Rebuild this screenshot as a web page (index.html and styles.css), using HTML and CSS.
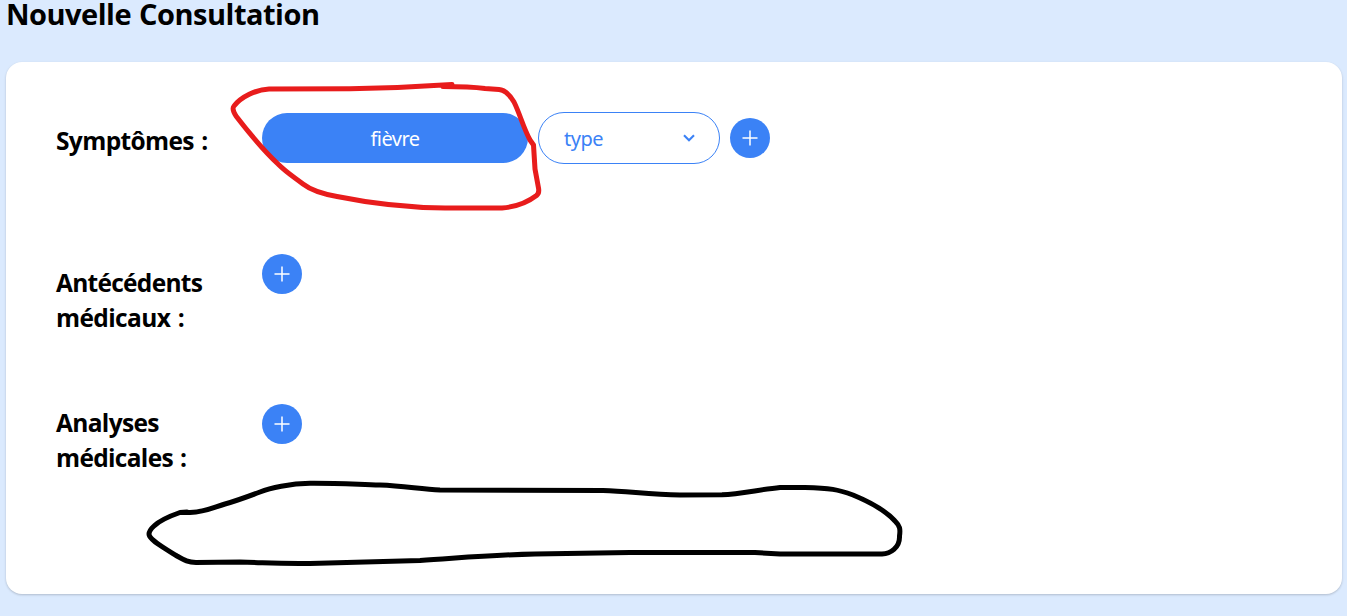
FILE: index.html
```html
<!DOCTYPE html>
<html lang="fr">
<head>
<meta charset="utf-8">
<title>Nouvelle Consultation</title>
<link rel="stylesheet" href="styles.css">
</head>
<body>
<main class="page">
  <h1 class="title">Nouvelle Consultation</h1>
  <section class="card">
    <div class="row row-symptoms">
      <h2 class="label"><span class="line symptoms">Symptômes :</span></h2>
      <div class="controls">
        <button class="pill"><span class="pill-text">fièvre</span></button>
        <button class="select"><span class="select-text">type</span>
          <svg class="chevron" width="12" height="8" viewBox="0 0 12 8"><path d="M1 1.200 6 6.200l5-5" fill="none" stroke="currentColor" stroke-width="2.100"/></svg>
        </button>
        <button class="add" aria-label="Ajouter"><svg width="16" height="16" viewBox="0 0 16 16"><path d="M8 .5v15M.5 8h15"/></svg></button>
      </div>
    </div>
    <div class="row row-history">
      <h2 class="label"><span class="line history">Antécédents</span><span class="line history-2">médicaux :</span></h2>
      <button class="add" aria-label="Ajouter"><svg width="16" height="16" viewBox="0 0 16 16"><path d="M8 .5v15M.5 8h15"/></svg></button>
    </div>
    <div class="row row-tests">
      <h2 class="label"><span class="line tests">Analyses</span><span class="line tests-2">médicales :</span></h2>
      <button class="add" aria-label="Ajouter"><svg width="16" height="16" viewBox="0 0 16 16"><path d="M8 .5v15M.5 8h15"/></svg></button>
    </div>
  </section>
</main>
<svg class="ink" width="1347" height="616" viewBox="0 0 1347 616">
  <path class="red" d="M452 84.500C430 86 400 88 350 88.800L269 89C256 89.500 241 97 234 106Q231.500 109 236 116C246 129 262 149 278 164C287 173 294 177 303 184C312 191 323 194 337 196.500C364 202 400 207.500 445 208L502 208C515 207 528 202 536.500 195.500Q539.500 193 538.500 188L535 169L533.500 145L530 140C523 127 520 114 514 102C511 97 506 90 499 89.500L485 88.500C470 86.500 455 86.500 443 86.500"/>
  <path class="black" d="M187 512L180 512.500C170 516 159 521 154 526Q147.500 532 149.500 536C153 542 164 548 177 556C184 560 188 562.500 196 562.500L240 562C265 562.500 275 564 310 563.500C350 562.500 380 561.500 420 560.500C460 558 490 555 535 554L630 552.500L755 552.500L780 554L882 554C890 553.500 900 548 899.500 536C900.500 529 900 526 895 521C886 511 870 502 853 495C838 489.500 830 488 805 487.500L780 487.500C760 489.500 740 494 722 494.800L680 495C650 494.500 630 491.500 603 490.500L440 490C422 489.500 405 486 380 485C350 484 335 483 310 483.200C290 483.500 270 488 260 492C248 496.500 236 501 225 504C212 508 205 512 190 512.500L180 512.500"/>
</svg>
</body>
</html>
```
FILE: styles.css
```css
* { box-sizing: border-box; }
body {
  margin: 0;
  height: 616px;
  overflow: hidden;
  background: #dbeafe;
  color: #000;
  font-family: "Open Sans", "Noto Sans", sans-serif;
}
h1, h2 { margin: 0; }
button {
  border: 0;
  padding: 0;
  margin: 0;
  font-family: "Noto Sans", "Open Sans", sans-serif;
  font-size: 20px;
  line-height: 28px;
}
.page { padding: 0 5px 0 6px; }
.title {
  height: 62px;
  padding-left: 0;
  font-size: 29px;
  line-height: 27px;
  font-weight: 700;
  letter-spacing: -0.5px;
  word-spacing: 1px;
  white-space: nowrap;
}
.card {
  height: 532px;
  padding: 50px 50px 0;
  border-radius: 16px;
  background: #fff;
  box-shadow: 0 1px 3px rgba(0, 0, 0, .1), 0 1px 2px rgba(0, 0, 0, .1);
}
.row { display: flex; align-items: flex-start; }
.row-symptoms { height: 142px; }
.row-history { height: 150px; }
.label {
  width: 206px;
  padding-top: 11px;
  font-size: 24.5px;
  line-height: 35px;
  font-weight: 700;
}
.row-tests .label { padding-top: 1px; }
.line { display: block; white-space: nowrap; word-spacing: 1.5px; }
.symptoms { letter-spacing: -.62px; }
.history { letter-spacing: -.72px; }
.history-2 { letter-spacing: -.6px; }
.tests { letter-spacing: -.66px; }
.tests-2 { letter-spacing: -.68px; }
.controls { display: flex; align-items: center; gap: 10px; }
.pill {
  width: 266px;
  height: 50px;
  border-radius: 25px;
  background: #3b82f6;
  color: #fff;
}
.select {
  display: flex;
  align-items: center;
  justify-content: space-between;
  width: 182px;
  height: 52px;
  padding: 0 24px 0 25px;
  border: 1px solid #3b82f6;
  border-radius: 26px;
  background: #fff;
  color: #3b82f6;
}
.pill-text, .select-text { display: block; padding-top: 2px; letter-spacing: -.5px; }
.add {
  display: grid;
  place-items: center;
  width: 40px;
  height: 40px;
  border-radius: 50%;
  background: #3b82f6;
}
.add path { stroke: #fff; stroke-width: 1.5; }
.ink { position: absolute; top: 0; left: 0; pointer-events: none; }
.ink path { fill: none; stroke-width: 5; stroke-linejoin: round; stroke-linecap: round; }
.red { stroke: #e81c1c; }
.black { stroke: #000; }
```
